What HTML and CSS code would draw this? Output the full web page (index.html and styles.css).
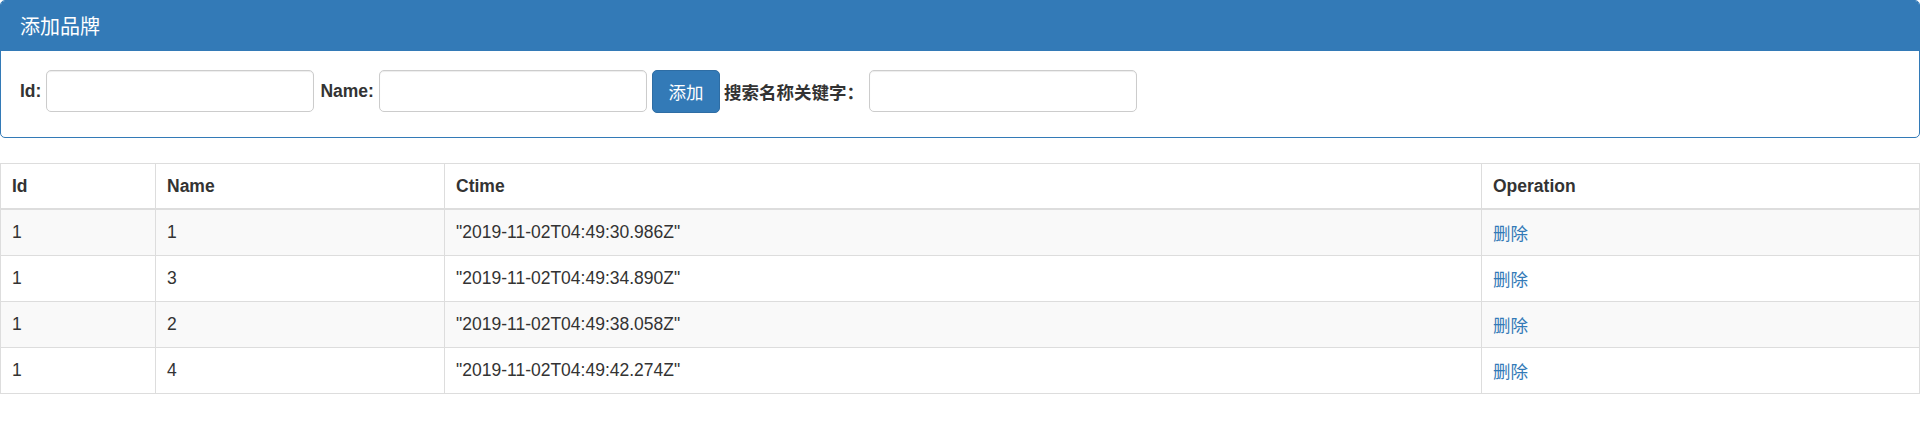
FILE: index.html
```html
<!DOCTYPE html>
<html lang="zh">
<head>
<meta charset="utf-8">
<title>品牌列表</title>
<link rel="stylesheet" href="styles.css">
</head>
<body>
<div class="app">
  <div class="panel">
    <div class="panel-heading">
      <h3 class="panel-title">添加品牌</h3>
    </div>
    <div class="panel-body">
      <label class="lbl lbl-id">Id:</label>
      <input class="form-control" type="text">
      <label class="lbl lbl-name">Name:</label>
      <input class="form-control" type="text">
      <button class="btn" type="button">添加</button>
      <label class="lbl lbl-search">搜索名称关键字：</label>
      <input class="form-control" type="text">
    </div>
  </div>

  <table class="table">
    <colgroup>
      <col class="c-id">
      <col class="c-name">
      <col class="c-time">
      <col>
    </colgroup>
    <thead>
      <tr><th>Id</th><th>Name</th><th>Ctime</th><th>Operation</th></tr>
    </thead>
    <tbody>
      <tr><td>1</td><td>1</td><td>"2019-11-02T04:49:30.986Z"</td><td><a href="#" class="del">删除</a></td></tr>
      <tr><td>1</td><td>3</td><td>"2019-11-02T04:49:34.890Z"</td><td><a href="#" class="del">删除</a></td></tr>
      <tr><td>1</td><td>2</td><td>"2019-11-02T04:49:38.058Z"</td><td><a href="#" class="del">删除</a></td></tr>
      <tr><td>1</td><td>4</td><td>"2019-11-02T04:49:42.274Z"</td><td><a href="#" class="del">删除</a></td></tr>
    </tbody>
  </table>
</div>
</body>
</html>
```

FILE: styles.css
```css
* { box-sizing: border-box; }
html, body { margin: 0; padding: 0; background: #fff; }
body {
  font-family: "Liberation Sans", Arial, "Noto Sans CJK SC", sans-serif;
  font-size: 17.5px;
  line-height: 25px;
  color: #333;
}
.panel {
  border: 1px solid #337ab7;
  border-radius: 5px;
  margin-bottom: 25px;
  background: #fff;
}
.panel-heading {
  background: #337ab7;
  color: #fff;
  height: 50px;
  padding: 0 19px;
  display: flex;
  align-items: center;
  border-top-left-radius: 4px;
  border-top-right-radius: 4px;
}
.panel-title {
  margin: 0;
  font-size: 20px;
  font-weight: normal;
  font-family: "Noto Sans CJK SC", sans-serif;
  line-height: 22px;
}
.panel-body {
  display: flex;
  align-items: center;
  padding: 18px 19px 24px 19px;
  height: 86px;
}
.lbl {
  font-weight: bold;
  font-family: "Liberation Sans", Arial, "Noto Sans CJK SC", sans-serif;
  white-space: nowrap;
}
.lbl-id { margin-right: 5px; }
.lbl-name { margin-left: 6px; margin-right: 5px; }
.lbl-search { margin-left: 4px; margin-right: 5px; font-family: "Noto Sans CJK SC", sans-serif; width: 140px; font-size: 17.5px; }
.form-control {
  width: 268px;
  height: 42px;
  border: 1px solid #ccc;
  border-radius: 5px;
  box-shadow: inset 0 1px 1px rgba(0,0,0,.075);
  padding: 7px 15px;
  font-size: 17.5px;
  background: #fff;
}
.btn {
  margin-left: 5px;
  width: 68px;
  height: 43px;
  background: #337ab7;
  border: 1px solid #2e6da4;
  border-radius: 5px;
  color: #fff;
  font-size: 17.5px;
  font-family: "Noto Sans CJK SC", sans-serif;
  padding: 0;
}
.table {
  width: 100%;
  border-collapse: collapse;
  border-spacing: 0;
  border: 1px solid #ddd;
  table-layout: fixed;
}
.c-id { width: 155px; }
.c-name { width: 289px; }
.c-time { width: 1037px; }
.table th, .table td {
  border: 1px solid #ddd;
  text-align: left;
  vertical-align: top;
  padding: 10px 11px;
  line-height: 25px;
}
.table th {
  font-weight: bold;
  border-bottom: 2px solid #ddd;
  padding-top: 10px;
  padding-bottom: 9px;
}
.table tbody tr:nth-child(odd) td { background: #f9f9f9; }
.del {
  display: inline-block;
  vertical-align: top;
  height: 25px;
  line-height: 25px;
  color: #337ab7;
  text-decoration: none;
  font-family: "Noto Sans CJK SC", sans-serif;
}
```
